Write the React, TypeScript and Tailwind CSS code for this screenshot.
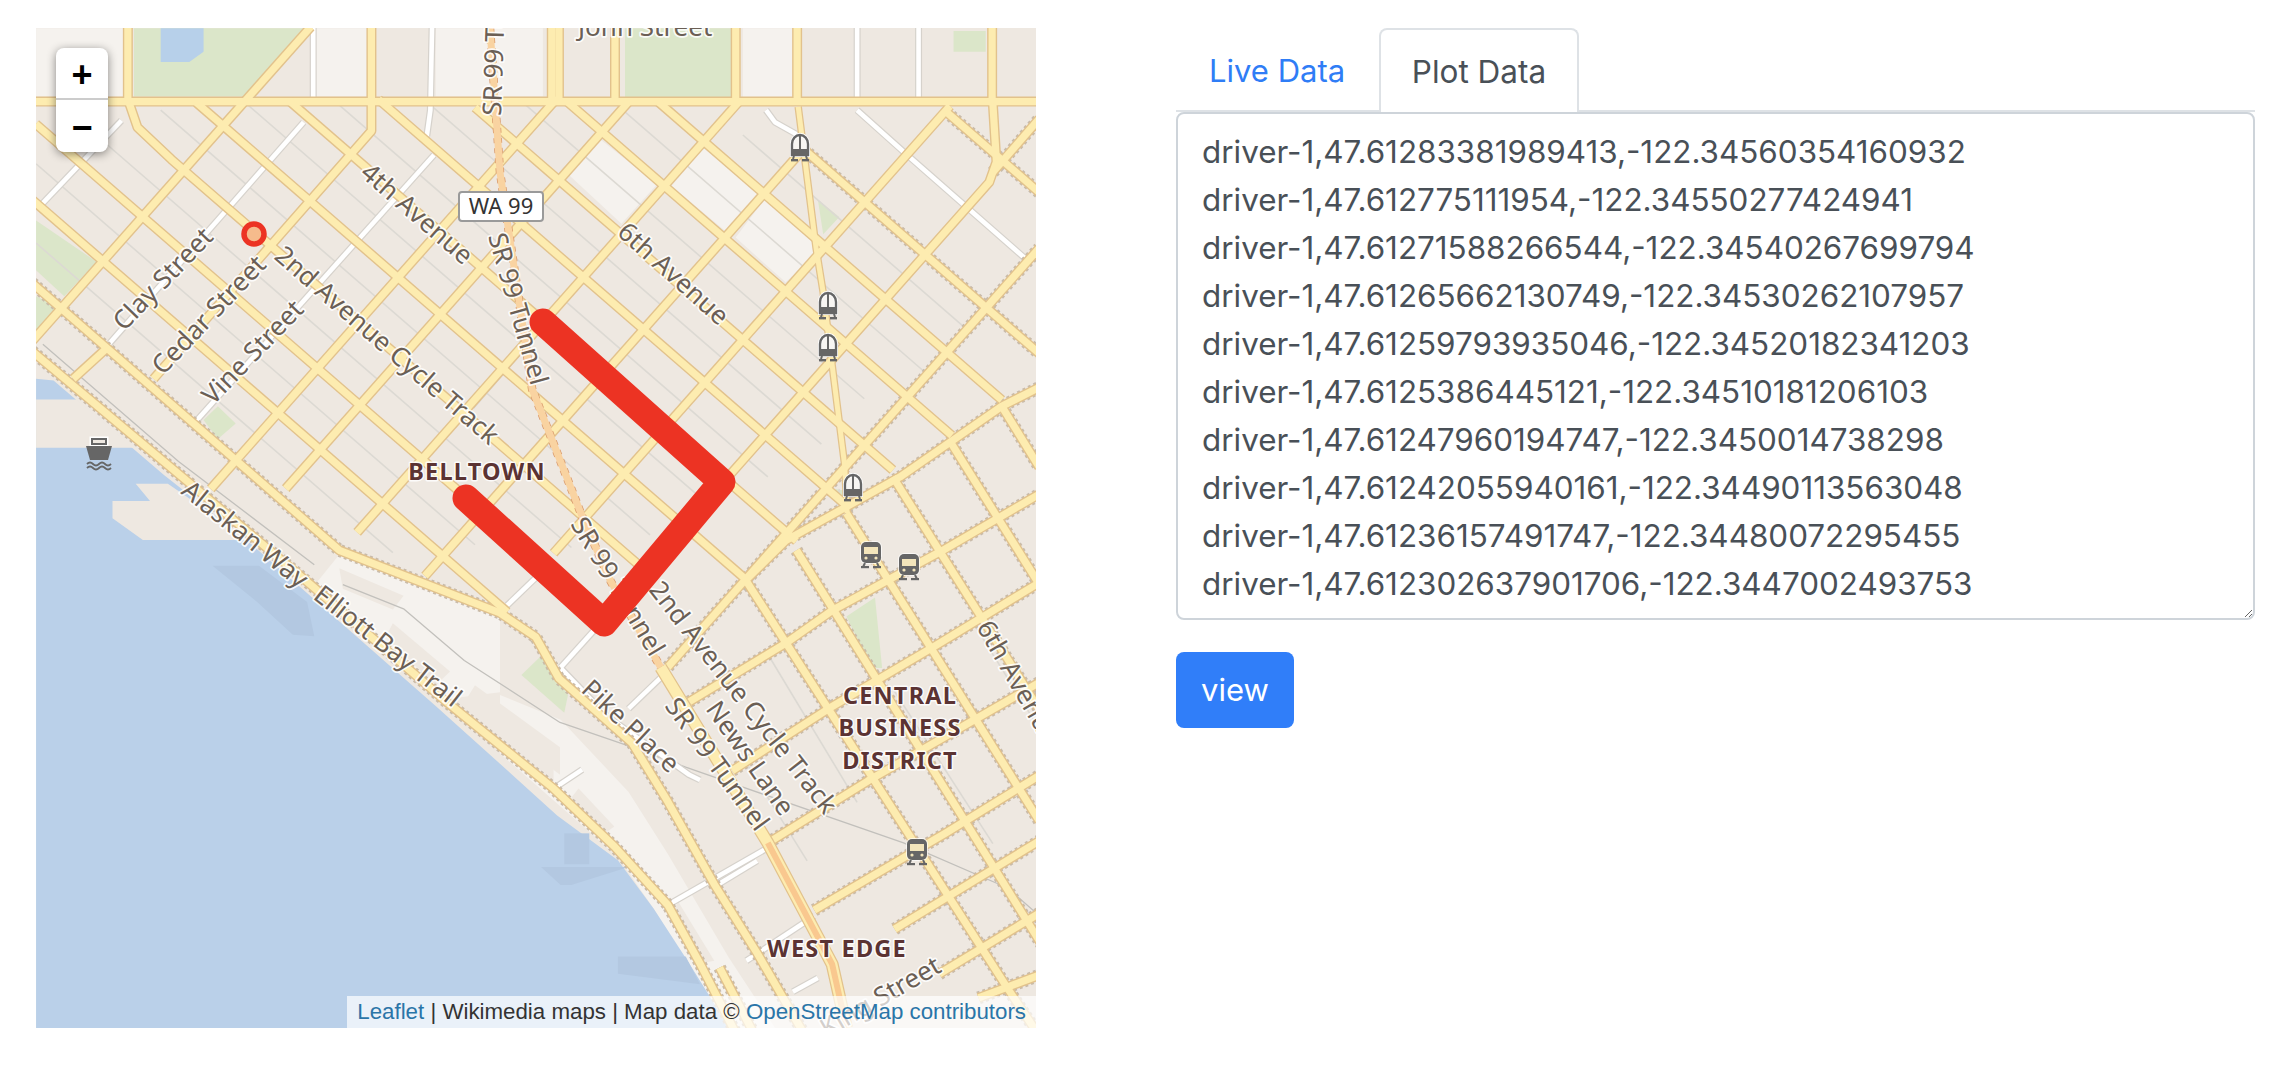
import React from "react";

type P = [number, number];
const pts = (a: P[]) => a.map((p) => p.join(",")).join(" ");
const av = (c: number, x0: number, x1: number): P[] => [[x0, c + 0.9 * x0], [x1, c + 0.9 * x1]];
const st = (d: number, x0: number, x1: number): P[] => [[x0, d - 1.17 * x0], [x1, d - 1.17 * x1]];
const vt = (x: number, y1 = 290): P[] => [[x, 70], [x, y1]];

const first: P[][] = [
  [[90, 295], [2910, 295]],
  vt(358), vt(1040), vt(1545), vt(1565), vt(1722), vt(2060), vt(2232), vt(2778),
  av(-1363, 1840, 2805), av(-1134, 1590, 2665), av(-885, 1330, 2500), av(-665, 1060, 2375),
  av(-436, 810, 2230), av(-197, 550, 2090), [[362, 300], [385, 370], ...av(31, 480, 1800)], av(270, 100, 1690), av(499, 90, 1420),
  st(1096, 90, 870),
  [[1040, 300], [1040, 380], [430, 1100]],
  st(2110, 590, 1560), st(2355, 800, 1760), st(2716, 1000, 2070), st(3065, 1190, 2260), st(3420, 1550, 2660),
  [...st(3770, 1700, 2770), [2790, 470], [2780, 300]],
  [[205, 1100], [300, 1010]],
];
const dashedRoads: P[][] = [
  av(-1592, 2250, 2910), av(-2060, 2650, 2910),
  st(4125, 1870, 2910), [[2780, 500], [2910, 345]],
  [[2090, 1683], [2200, 1570], [2520, 1385], [2805, 1180], [2910, 1125]],
  [[1930, 2038], [2200, 1868], [2330, 1773], [2640, 1598], [2910, 1435]],
  [[2050, 2238], [2320, 2058], [2615, 1878], [2910, 1692]],
  [[2150, 2448], [2430, 2268], [2910, 1982]],
  [[2280, 2643], [2650, 2418], [2910, 2252]],
  [[2505, 2698], [2910, 2442]],
  [[2630, 2828], [2910, 2652]],
  [[2740, 2898], [2910, 2832]],
  [[2090, 1688], [2820, 2868], [2930, 3040]],
  [[2230, 1598], [2800, 2548], [3070, 3000]],
  [[2370, 1490], [2910, 2384]],
  [[2500, 1385], [2910, 2060]],
  [[2665, 1290], [2910, 1697]],
  [[2805, 1180], [2910, 1357]],
  [[90, 822], [950, 1598], [1400, 1780], [1500, 1850], [1565, 1970], [1770, 2158], [1870, 2328], [2000, 2568], [2120, 2768], [2250, 3000]],
  [[90, 1020], [870, 1698], [1250, 2038], [1550, 2290], [1720, 2458], [1870, 2628], [1960, 2798], [2060, 3000]],
  [[2015, 2810], [2110, 3000]],
];
const westlake: P[] = [[2235, 310], [2285, 720], [2305, 850], [2330, 1060], [2365, 1350], [2372, 1490]];
const whites: P[][] = [
  [[877, 70], [877, 285]], [[1210, 70], [1205, 320], [1195, 395]], [[2400, 70], [2400, 285]], [[2572, 70], [2572, 285]],
  [[300, 1005], [850, 355]], [[120, 590], [340, 350]], [[550, 1222], [1215, 450]],
  [[1670, 400], [1580, 500]], [[1640, 800], [1400, 1085], [1320, 1180]],
  [[2145, 320], [2170, 355], [2230, 390]],
  [[2400, 320], [2540, 450], [2870, 750]],
  [[1500, 1678], [1420, 1758]], [[1690, 1800], [1570, 1938]], [[1850, 1968], [1760, 2058]],
  [[1870, 2628], [2140, 2468]], [[1550, 2290], [1630, 2235]], [[2000, 2575], [2120, 2500]], [[2090, 2790], [2280, 2660]], [[2220, 2880], [2290, 2840]],
  [[1570, 1940], [1700, 2080], [1930, 2250], [1960, 2265]],
];
const alleys: P[][] = [
  ...[-1480, -1250, -1020, -780, -550, -320, -85, 150, 385, 615].map((c, i) => av(c, [2080, 1720, 1470, 1200, 950, 680, 450, 260, 101, 101][i], [2720, 2590, 2420, 2300, 2150, 2000, 1820, 1600, 1330, 1100][i])),
  [[2500, 2000], [2780, 2450]], [[2350, 1780], [2650, 2280]], [[2150, 1900], [2400, 2330]],
  [[2720, 1800], [2900, 2100]], [[2080, 2200], [2260, 2500]], [[2340, 1490], [2350, 1420]],
];
const rail: P[][] = [
  [[960, 1698], [1130, 1768], [1300, 1918], [1568, 2098], [1770, 2170], [1920, 2228], [2530, 2448], [2820, 2578], [2900, 2650]],
  [[120, 1000], [500, 1340], [880, 1640]],
];
const light: P[][] = [
  [[101, 82], [345, 82], [345, 280], [101, 280]], [[885, 82], [1030, 82], [1030, 280], [885, 280]], [[1220, 82], [1520, 82], [1520, 280], [1220, 280]],
  [[2080, 82], [2220, 82], [2220, 285], [2080, 285]],
  [[1590, 505], [1675, 400], [1840, 535], [1740, 650]], [[1880, 540], [1970, 430], [2130, 565], [2030, 670]], [[2060, 690], [2140, 580], [2270, 690], [2280, 740], [2200, 820]],
  [[1400, 2018], [1570, 2090], [1760, 2300], [1870, 2480], [2040, 2780], [2170, 2985], [2040, 2985], [1830, 2638], [1730, 2488], [1400, 2188]],
  [[950, 1610], [1400, 1790], [1400, 2010], [1250, 2030], [880, 1700]],
];
const tan: P[][] = [
  [[950, 1650], [1130, 1730], [1100, 1770], [960, 1710]],
  [[1100, 1810], [1260, 1950], [1220, 1990], [1080, 1850]],
  [[1330, 1990], [1568, 2170], [1568, 2250], [1300, 2040]],
  [[1400, 2048], [1550, 2168], [1550, 2278], [1400, 2158]],
  [[1620, 2290], [1720, 2400], [1680, 2430], [1590, 2330]],
  [[1900, 2620], [2000, 2790], [1950, 2800], [1870, 2660]],
];
const green: P[][] = [
  [[375, 82], [855, 82], [680, 280], [375, 280]], [[1750, 82], [2050, 82], [2050, 285], [1750, 285]], [[2670, 90], [2760, 90], [2760, 150], [2670, 150]],
  [[101, 640], [270, 760], [180, 860], [101, 785]], [[101, 860], [160, 890], [101, 960]], [[570, 1220], [610, 1180], [660, 1230], [610, 1275]],
  [[2290, 580], [2350, 630], [2305, 680]], [[2340, 1420], [2390, 1430], [2400, 1470], [2370, 1500]], [[1460, 1960], [1520, 1900], [1590, 2020], [1580, 2070]],
  [[2370, 1790], [2450, 1735], [2470, 1940], [2440, 1940]],
];
const water: P[] = [[101, 1100], [150, 1105], [460, 1380], [690, 1568], [1220, 2050], [1400, 2218], [1560, 2368], [1730, 2498], [1830, 2638], [1930, 2798], [1990, 2898], [2040, 2985], [101, 2985]];
const piers: P[][] = [
  [[101, 1160], [215, 1160], [375, 1300], [101, 1300]],
  [[380, 1405], [470, 1405], [700, 1568], [400, 1568], [315, 1505], [315, 1455], [420, 1455]],
];
const shadows: P[][] = [
  [[595, 1643], [725, 1643], [860, 1748], [880, 1848], [820, 1843], [720, 1748]],
  [[1515, 2518], [1760, 2518], [1600, 2570], [1570, 2570]],
  [[1730, 2778], [1920, 2778], [1960, 2858], [1730, 2828]],
  [[1580, 2420], [1650, 2420], [1650, 2510], [1580, 2510]],
];

const labels: [string, number, number, number][] = [
  ["Clay Street", 124, 332, -46],
  ["Cedar Street", 163, 376, -46.5],
  ["Vine Street", 213, 406, -46],
  ["2nd Avenue Cycle Track", 273, 258, 41],
  ["4th Avenue", 359, 175, 41],
  ["SR 99 Tunnel", 488, 236, 74],
  ["SR 99 Tunnel", 501, 116, -88],
  ["6th Avenue", 616, 234, 42],
  ["Alaskan Way", 180, 493, 39],
  ["Elliott Bay Trail", 312, 598, 38],
  ["2nd Avenue Cycle Track", 648, 590, 52],
  ["SR 99 Tunnel", 570, 524, 59],
  ["SR 99 Tunnel", 664, 706, 54],
  ["News Lane", 705, 709, 55],
  ["Pike Place", 580, 691, 43],
  ["6th Avenue", 976, 627, 60],
];

function Tram({ x, y }: { x: number; y: number }) {
  return (
    <g transform={`translate(${x} ${y})`}>
      <path d="M-8 7V-4A8 9 0 0 1 8 -4V7Z" fill="#f7f5f2" stroke="#ffffff" strokeWidth="4" />
      <path d="M-8 7V-4A8 9 0 0 1 8 -4V7Z" fill="none" stroke="#666" strokeWidth="2.4" />
      <path d="M0 -12V7" stroke="#666" strokeWidth="2" />
      <rect x="-8" y="1" width="16" height="6" fill="#666" />
      <path d="M-6 8l-1 3M6 8l1 3" stroke="#666" strokeWidth="2" />
      <rect x="-9" y="11" width="7" height="2.4" fill="#666" />
      <rect x="2" y="11" width="7" height="2.4" fill="#666" />
    </g>
  );
}

function Train({ x, y }: { x: number; y: number }) {
  return (
    <g transform={`translate(${x} ${y})`}>
      <rect x="-11" y="-13" width="22" height="23" rx="6" fill="#fff" opacity="0.7" />
      <rect x="-10" y="-12" width="20" height="21" rx="5" fill="#666" />
      <rect x="-7" y="-7" width="14" height="7" fill="#f3e5bb" />
      <circle cx="-5" cy="4" r="1.6" fill="#f3e5bb" />
      <circle cx="5" cy="4" r="1.6" fill="#f3e5bb" />
      <path d="M-6 9l-2 4M6 9l2 4" stroke="#666" strokeWidth="2" />
      <rect x="-10" y="12" width="8" height="2.2" fill="#666" />
      <rect x="2" y="12" width="8" height="2.2" fill="#666" />
    </g>
  );
}

function Boat({ x, y }: { x: number; y: number }) {
  return (
    <g transform={`translate(${x} ${y})`}>
      <path d="M-8 -15H8V-7H-8Z" fill="none" stroke="#fff" strokeWidth="3" />
      <path d="M-8 -15H8V-8H-8Z M-6 -13V-10H6V-13Z" fill="#666" fillRule="evenodd" />
      <path d="M-13 -7H13L9 7H-9Z" fill="#666" />
      <path d="M-12 11q3 -3 6 0t6 0t6 0t6 0M-12 15q3 -3 6 0t6 0t6 0t6 0" fill="none" stroke="#666" strokeWidth="1.8" />
    </g>
  );
}

function MapArt() {
  const ve = { vectorEffect: "non-scaling-stroke" as const };
  const line = (a: P[], i: number, color: string, w: number, dash?: string) => (
    <polyline key={i} points={pts(a)} fill="none" stroke={color} strokeWidth={w} strokeDasharray={dash} strokeLinejoin="round" style={ve} />
  );
  const yellow = [...first, ...dashedRoads];
  return (
    <svg viewBox="36 28 1000 1000" className="block w-full h-full">
      <rect x="36" y="28" width="1000" height="1000" fill="#eee8e1" />
      <g transform="scale(0.35714 0.34435)">
        {light.map((a, i) => <polygon key={i} points={pts(a)} fill="#f5f2ee" />)}
        {tan.map((a, i) => <polygon key={i} points={pts(a)} fill="#eee8e1" />)}
        {green.map((a, i) => <polygon key={i} points={pts(a)} fill="#dbe6c9" />)}
        <polygon points={pts([[450, 82], [570, 82], [570, 150], [530, 180], [450, 180]])} fill="#b7d0ea" />
        <polygon points={pts(water)} fill="#bad0e9" />
        {piers.map((a, i) => <polygon key={i} points={pts(a)} fill="#eee8e1" />)}
        {shadows.map((a, i) => <polygon key={i} points={pts(a)} fill="#b3c8e1" />)}
        {alleys.map((a, i) => line(a, i, "#dcd9d3", 1.6))}
        {rail.map((a, i) => line(a, i, "#c2c0bc", 1.3))}
        {whites.map((a, i) => line(a, i, "#d6d2cc", 7))}
        {whites.map((a, i) => line(a, i, "#ffffff", 4.6))}
        {dashedRoads.map((a, i) => line(a, i, "#c9bba9", 13, "3 3"))}
        {yellow.map((a, i) => line(a, i, "#e2c28c", 10))}
        {line(westlake, 900, "#e2c28c", 7.5)}
        {yellow.map((a, i) => line(a, i, "#fdecb0", 7.2))}
        {line(westlake, 901, "#fdecb0", 5)}
        {line([[1372, 82], [1400, 500], [1490, 1130], [1630, 1500], [1710, 1688], [1850, 1938]], 903, "#d99a6c", 8.5, "5 5")}
        {line([[1372, 82], [1400, 500], [1490, 1130], [1630, 1500], [1710, 1688], [1850, 1938]], 904, "#f9d3a1", 7)}
        {line([[1850, 1938], [2150, 2448], [2330, 2800], [2370, 2985]], 905, "#e2c28c", 13)}
        {line([[1850, 1938], [2150, 2448], [2330, 2800], [2370, 2985]], 906, "#fdecb0", 10.5)}
        {line([[2150, 2448], [2330, 2800], [2370, 2985]], 907, "#f9c88f", 6)}
      </g>
      <g fontFamily="'Noto Sans', sans-serif" fontSize="26" fill="#6b5f55" stroke="#ffffff" strokeWidth="3.5" strokeOpacity="0.85" paintOrder="stroke" strokeLinejoin="round">
        {labels.map(([t, x, y, r], i) => (
          <text key={i} transform={`translate(${x} ${y}) rotate(${r})`}>{t}</text>
        ))}
        <text x="578" y="36">John Street</text>
        <text transform="translate(943 971) rotate(-30)" textAnchor="end">King Street</text>
      </g>
      <g fontFamily="'Noto Sans', sans-serif" fontSize="23.5" fontWeight="700" fill="#5b3333" stroke="#ffffff" strokeWidth="3" strokeOpacity="0.85" paintOrder="stroke" strokeLinejoin="round" letterSpacing="1.2" textAnchor="middle">
        <text x="477" y="480">BELLTOWN</text>
        <text x="900" y="704">CENTRAL</text>
        <text x="900" y="736">BUSINESS</text>
        <text x="900" y="769">DISTRICT</text>
        <text x="837" y="957">WEST EDGE</text>
      </g>
      <rect x="459" y="192" width="84" height="29" rx="3" fill="#ffffff" stroke="#9a9a9a" strokeWidth="2" />
      <text x="501" y="214" textAnchor="middle" fontFamily="'Noto Sans', sans-serif" fontSize="22" fill="#333333">WA 99</text>
      <Tram x={800} y={148} />
      <Tram x={828} y={306} />
      <Tram x={828} y={348} />
      <Tram x={853} y={488} />
      <Train x={871} y={554} />
      <Train x={909} y={566} />
      <Train x={917} y={851} />
      <Boat x={99} y={453} />
      <polyline points="543,322 722,482 604,623 466,498" fill="none" stroke="#ec3323" strokeWidth="27" strokeLinecap="round" strokeLinejoin="round" />
      <circle cx="254" cy="234" r="10" fill="#f6bb8c" stroke="#ec3323" strokeWidth="5.5" />
    </svg>
  );
}

const rows = [
  "driver-1,47.61283381989413,-122.34560354160932",
  "driver-1,47.612775111954,-122.34550277424941",
  "driver-1,47.61271588266544,-122.34540267699794",
  "driver-1,47.61265662130749,-122.34530262107957",
  "driver-1,47.61259793935046,-122.34520182341203",
  "driver-1,47.6125386445121,-122.34510181206103",
  "driver-1,47.61247960194747,-122.3450014738298",
  "driver-1,47.61242055940161,-122.34490113563048",
  "driver-1,47.61236157491747,-122.34480072295455",
  "driver-1,47.612302637901706,-122.3447002493753",
];

export default function App() {
  return (
    <div className="flex min-h-[1092px] bg-white pl-9 pt-7 pr-[25px] font-['Inter',sans-serif] text-[#495057]">
      <div className="relative w-[1000px] h-[1000px] shrink-0 overflow-hidden">
        <MapArt />
        <div className="absolute left-5 top-5 w-[52px] h-[104px] rounded-lg bg-white shadow-[0_2px_10px_rgba(0,0,0,0.45)] flex flex-col font-['Liberation_Sans',sans-serif] font-bold text-black">
          <div className="h-[52px] flex items-center justify-center pt-1 border-b-2 border-[#cccccc] text-[36px] leading-none">+</div>
          <div className="h-[52px] flex items-center justify-center pt-1 text-[36px] leading-none">−</div>
        </div>
        <div className="absolute right-0 bottom-0 h-8 pl-[10px] pr-[10px] flex items-center bg-white/70 text-[22.3px] text-[#333333] whitespace-pre font-['Liberation_Sans',sans-serif]">
          <span className="text-[#2a75a8]">Leaflet</span> | Wikimedia maps | Map data © <span className="text-[#2a75a8]">OpenStreetMap contributors</span>
        </div>
      </div>
      <div className="ml-[140px] flex-1 min-w-0">
        <div className="flex h-[84px] border-b-2 border-[#dee2e6]">
          <div className="w-[203px] h-[84px] flex items-center pl-[33px] pt-0.5 text-[31px] text-[#2f7df6]">Live Data</div>
          <div className="w-[200px] h-[84px] flex items-center justify-center pt-0.5 border-2 border-b-0 border-[#dee2e6] rounded-t-lg bg-white text-[31.5px]">Plot Data</div>
        </div>
        <textarea
          readOnly
          rows={10}
          defaultValue={rows.join("\n")}
          className="block w-full h-[508px] border-2 border-[#ced4da] rounded-lg px-6 pt-[14px] pb-2 text-[31.4px] leading-[48px] text-[#495057] bg-white outline-none resize-y overflow-hidden"
        />
        <button className="block mt-[32px] w-[118px] h-[76px] rounded-lg bg-[#307ef9] text-white text-[31px]">view</button>
      </div>
    </div>
  );
}
